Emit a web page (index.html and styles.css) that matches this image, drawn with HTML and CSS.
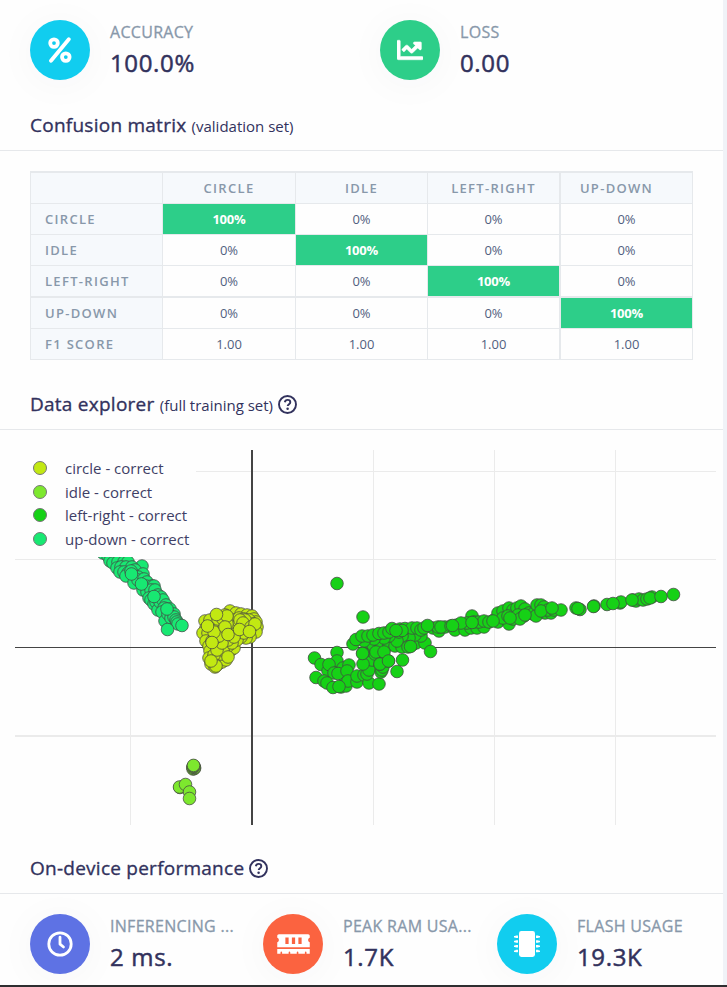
FILE: index.html
```html
<!DOCTYPE html>
<html lang="en">
<head>
<meta charset="utf-8">
<title>Model performance</title>
<link rel="stylesheet" href="styles.css">
</head>
<body>
<main class="panel">
  <section class="stats stats-top">
    <div class="stat">
      <span class="badge cyan"><svg width="24" height="26" viewBox="0 0 24 26"><g fill="none" stroke="#fff" stroke-width="3.8" stroke-linecap="round"><circle cx="6" cy="6.1" r="3.8"/><circle cx="17.8" cy="20.1" r="3.8"/><path d="M20.8 2.2 3 23.8"/></g></svg></span>
      <div class="stat-text"><div class="label">ACCURACY</div><div class="value">100.0%</div></div>
    </div>
    <div class="stat">
      <span class="badge green"><svg width="26" height="26" viewBox="0 0 512 512"><path fill="#fff" stroke="#fff" stroke-width="10" d="M496 384H64V80c0-8.84-7.16-16-16-16H16C7.16 64 0 71.16 0 80v336c0 17.67 14.33 32 32 32h464c8.84 0 16-7.16 16-16v-32c0-8.84-7.16-16-16-16zM464 96H345.94c-21.38 0-32.09 25.85-16.97 40.97l32.4 32.4L288 242.75l-73.37-73.37c-12.5-12.5-32.76-12.5-45.25 0l-68.69 68.69c-6.25 6.25-6.25 16.38 0 22.63l22.62 22.62c6.25 6.25 16.38 6.25 22.63 0L192 237.25l73.37 73.37c12.5 12.5 32.76 12.5 45.25 0l96-96 32.4 32.4c15.12 15.12 40.97 4.41 40.97-16.97V112c.01-8.84-7.15-16-15.99-16z"/></svg></span>
      <div class="stat-text"><div class="label">LOSS</div><div class="value">0.00</div></div>
    </div>
  </section>

  <h2 class="heading heading-matrix">Confusion matrix <small>(validation set)</small></h2>

  <table class="matrix">
    <colgroup><col class="c132"><col class="c133"><col class="c132"><col class="c133"><col class="c132"></colgroup>
    <tr><th></th><th>CIRCLE</th><th>IDLE</th><th>LEFT-RIGHT</th><th class="last">UP-DOWN</th></tr>
    <tr><th>CIRCLE</th><td class="hit">100%</td><td>0%</td><td>0%</td><td>0%</td></tr>
    <tr><th>IDLE</th><td>0%</td><td class="hit">100%</td><td>0%</td><td>0%</td></tr>
    <tr class="thick"><th>LEFT-RIGHT</th><td>0%</td><td>0%</td><td class="hit">100%</td><td>0%</td></tr>
    <tr><th>UP-DOWN</th><td>0%</td><td>0%</td><td>0%</td><td class="hit">100%</td></tr>
    <tr><th>F1 SCORE</th><td>1.00</td><td>1.00</td><td>1.00</td><td>1.00</td></tr>
  </table>

  <h2 class="heading heading-explorer">Data explorer <small>(full training set)</small> <svg class="help" width="19" height="19" viewBox="0 0 19 19"><circle cx="9.5" cy="9.5" r="8.5"/><path d="M6.8 7.2C7.1 5.6 8.2 4.9 9.6 4.9c1.5 0 2.7.9 2.7 2.3 0 1.9-2.6 2-2.6 3.9"/><circle class="dot" cx="9.6" cy="13.7" r="1.25"/></svg></h2>

  <div class="plot">
    <svg id="scatter" width="701" height="375" viewBox="15 450 701 375">
      <g class="grid">
        <path d="M130.5 450V825M373.5 450V825M494.5 450V825M615.5 450V825M15 471.5H716M15 559.5H716"/>
        <path class="wide" d="M15 736H716"/>
      </g>
      <path class="axis-x" d="M15 647.5H716"/>
      <path class="axis-y" d="M252 450V825"/>
      <g id="points"></g>
    </svg>
    <ul class="legend">
      <li><i class="k-circle"></i>circle - correct</li>
      <li><i class="k-idle"></i>idle - correct</li>
      <li><i class="k-lr"></i>left-right - correct</li>
      <li><i class="k-ud"></i>up-down - correct</li>
    </ul>
  </div>

  <h2 class="heading heading-device">On-device performance <svg class="help" width="19" height="19" viewBox="0 0 19 19"><circle cx="9.5" cy="9.5" r="8.5"/><path d="M6.8 7.2C7.1 5.6 8.2 4.9 9.6 4.9c1.5 0 2.7.9 2.7 2.3 0 1.9-2.6 2-2.6 3.9"/><circle class="dot" cx="9.6" cy="13.7" r="1.25"/></svg></h2>

  <section class="stats stats-bottom">
    <div class="stat">
      <span class="badge indigo"><svg width="26" height="26" viewBox="0 0 26 26"><circle cx="13" cy="13" r="11.2" fill="none" stroke="#fff" stroke-width="2.8"/><path d="M13 6.2V13.2L16.5 16" fill="none" stroke="#fff" stroke-width="2.8" stroke-linecap="round" stroke-linejoin="round"/></svg></span>
      <div class="stat-text"><div class="label">INFERENCING ...</div><div class="value">2 ms.</div></div>
    </div>
    <div class="stat">
      <span class="badge orange"><svg width="33" height="26" viewBox="0 0 640 512"><path fill="#fff" d="M640 130.94V96c0-17.67-14.33-32-32-32H32C14.33 64 0 78.33 0 96v34.94c18.6 6.61 32 24.19 32 45.06s-13.4 38.45-32 45.06V320h640v-98.94c-18.6-6.61-32-24.19-32-45.06s13.4-38.45 32-45.06zM224 256h-64V128h64v128zm128 0h-64V128h64v128zm128 0h-64V128h64v128zM0 448h64v-26.67c0-8.84 7.16-16 16-16s16 7.16 16 16V448h128v-26.67c0-8.84 7.16-16 16-16s16 7.16 16 16V448h128v-26.67c0-8.84 7.16-16 16-16s16 7.16 16 16V448h128v-26.67c0-8.84 7.16-16 16-16s16 7.16 16 16V448h64v-96H0v96z"/></svg></span>
      <div class="stat-text"><div class="label">PEAK RAM USA...</div><div class="value">1.7K</div></div>
    </div>
    <div class="stat">
      <span class="badge cyan"><svg width="26" height="26" viewBox="0 0 26 26"><g fill="#fff"><rect x="5" width="16" height="26" rx="2.4"/><path d="M4 4.4v2.5H1.8L1.2 6.5H0V5h1.2l.6-.6zM4 9.2v2.5H1.8l-.6-.4H0V9.8h1.2l.6-.6zM4 14v2.5H1.8l-.6-.4H0v-1.5h1.2l.6-.6zM4 18.8v2.5H1.8l-.6-.4H0v-1.5h1.2l.6-.6zM22 4.4v2.5h2.2l.6-.4H26V5h-1.2l-.6-.6zM22 9.2v2.5h2.2l.6-.4H26V9.8h-1.2l-.6-.6zM22 14v2.5h2.2l.6-.4H26v-1.5h-1.2l-.6-.6zM22 18.8v2.5h2.2l.6-.4H26v-1.5h-1.2l-.6-.6z"/></g></svg></span>
      <div class="stat-text"><div class="label">FLASH USAGE</div><div class="value">19.3K</div></div>
    </div>
  </section>
</main>
<script src="script.js"></script>
</body>
</html>
```
FILE: styles.css
```css
* { box-sizing: border-box; }
html { background: #f0f2f7; }
body {
  margin: 0;
  width: 727px;
  height: 987px;
  overflow: hidden;
  font-family: "Open Sans", sans-serif;
  color: #32325d;
  border-bottom: 2px solid #2e2e30;
  background: #f0f2f7;
}
.panel { width: 723px; height: 985px; background: #fefefe; overflow: hidden; }
.stats { display: grid; padding-left: 30px; }
.stats-top { grid-template-columns: 350px 343px; padding-top: 20px; height: 102px; }
.stats-bottom { grid-template-columns: 233px 234px 1fr; padding-top: 20px; }
.stat { display: flex; gap: 20px; }
.badge {
  flex: none;
  width: 60px;
  height: 60px;
  border-radius: 50%;
  display: flex;
  align-items: center;
  justify-content: center;
  box-shadow: 0 4px 42px rgba(60, 60, 80, .04);
}
.cyan { background: #11cdef; }
.green { background: #2dce89; }
.indigo { background: #5e72e4; }
.orange { background: #fb6340; }
.label { font-size: 16px; line-height: 24px; font-weight: 500; letter-spacing: .3px; color: #8898aa; -webkit-text-stroke: .3px #8898aa; white-space: nowrap; }
.value { font-size: 24px; line-height: 36px; margin-top: 1px; font-weight: 500; letter-spacing: .65px; -webkit-text-stroke: .5px #32325d; }
.heading {
  margin: 0;
  padding-left: 30px;
  height: 49px;
  line-height: 46px;
  font-size: 19px;
  font-weight: 500;
  letter-spacing: .25px;
  -webkit-text-stroke: .35px #32325d;
  white-space: nowrap;
  border-bottom: 1px solid #e6e8eb;
}
.heading small { font-size: 15px; font-weight: 400; letter-spacing: 0; -webkit-text-stroke: 0; }
.help { vertical-align: -3px; fill: none; stroke: #32325d; stroke-width: 1.9; }
.help .dot { fill: #32325d; stroke: none; }
.matrix {
  margin: 20px 0 0 30px;
  width: 663px;
  table-layout: fixed;
  border-collapse: separate;
  border-spacing: 0;
  border-top: 2px solid #e6e9ec;
  border-left: 1px solid #e6e9ec;
}
.c132 { width: 132px; }
.c133 { width: 133px; }
.matrix th, .matrix td {
  height: 31px;
  padding: 0;
  line-height: 18px;
  text-align: center;
  font-size: 13px;
  border-right: 1px solid #e6e9ec;
  border-bottom: 1px solid #e6e9ec;
}
.matrix td { color: #525f7f; }
.matrix th { background: #f6f9fc; color: #8898aa; font-weight: 600; letter-spacing: 1.3px; }
.matrix th:first-child { text-align: left; padding-left: 14px; }
.matrix th:nth-child(4), .matrix td:nth-child(4) { border-right-width: 2px; }
.matrix .thick th, .matrix .thick td { height: 32px; border-bottom-width: 2px; }
.matrix th.last { padding-right: 20px; }
.matrix td.hit { background: #2dce89; color: #fff; font-weight: 700; letter-spacing: -.2px; }
.heading-explorer { margin-top: 21px; }
.plot { position: relative; margin: 20px 0 0 15px; width: 701px; height: 375px; }
.plot svg { display: block; }
.grid path { fill: none; stroke: #ebebeb; stroke-width: 1; }
.grid .wide { stroke-width: 2; }
.axis-x { stroke: #444; stroke-width: 1; }
.axis-y { stroke: #444; stroke-width: 2; }
#points circle { stroke: #444; stroke-opacity: .75; stroke-width: 1; }
.legend {
  position: absolute;
  left: 0;
  top: 0;
  width: 181px;
  height: 107px;
  margin: 0;
  padding: 6px 0 0 18px;
  list-style: none;
  background: #fefefe;
}
.legend li { display: flex; align-items: center; height: 23.7px; font-size: 15px; white-space: nowrap; color: #3f3f66; }
.legend i { width: 14px; height: 14px; margin-right: 18px; border-radius: 50%; border: 1px solid #777; }
.k-circle { background: #c2e812; }
.k-idle { background: #7de82e; }
.k-lr { background: #16d116; }
.k-ud { background: #18e872; }
.heading-device { margin-top: 20px; }
```
FILE: script.js
```js
// Point centres of each class, listed back to front.
const series = [
  { fill: '#18e872', points: [
    [103,553],[108,556],[112,554],[116,558],[122,556],[125,558],[110,561],[113,563],[118,562],[124,562],[128,562],[142,566],[117,568],[121,567],[126,567],[132,567],[135,570],[143,574],[120,572],[124,572],[128,573],[134,575],[138,577],[126,576],[134,583],[138,580],[144,579],[147,582],[146,586],[152,586],[154,586],[143,590],[147,592],[151,590],[155,590],[149,598],[151,600],[154,604],[156,602],[158,595],[161,597],[158,610],[160,602],[163,600],[166,605],[164,608],[162,612],[170,609],[174,614],[165,621],[168,614],[171,618],[174,617],[176,620],[177,622],[178,624],[182,625.5],[167.5,629.5],[167,609],[154,596.5],[141.5,584],[131,571],[131.5,574]] },
  { fill: '#c2e812', points: [
    [205,621],[206,628],[203,633],[208,633],[206,641],[209,646],[212,641],[210,651],[209,658],[211,664],[215,667],[218,664],[222,662],[226,660],[221,654],[214,655],[231,650],[234,648],[228,646],[223,650],[217,650],[230,611],[236,613],[241,614],[247,615],[252,616],[254,619],[256,622],[257,627],[256,632],[250,637],[246,638],[241,637],[237,640],[232,643],[228,640],[222,643],[215,638],[213,627],[218,625],[225,615],[228,618],[234,620],[239,618],[244,619],[249,620],[253,624],[246,626],[241,624],[235,627],[230,630],[222,631],[227,624],[219,636],[214,632],[210,620],[218,619],[223,619],[227,616],[237,633],[244,633],[234,637],[245,620],[240,620],[243,623],[251,627],[255,624],[216.5,614.5],[207.5,626],[225,627],[228,634.5],[239.5,629.5],[249.5,631.5],[212,642.5],[228,657],[216,666],[211,661]] },
  { fill: '#7de82e', points: [
    [193,769],[194.5,768.5],[193.5,768.5],[194.5,767.5],[192.8,767.2],[193.5,766.8],[194,766.2],[193.5,766],[193.5,765.4],[180,787.5],[179.5,787],[185.5,784.5],[189.5,792],[189.5,798.5]] },
  { fill: '#16d116', points: [
    [337,583.5],[363,617],[314.5,658],[337,652.5],[321,664.5],[337,661],[328,671],[343,668],[349,665],[329,664.5],[334,673],[316,677.5],[324,681],[327,683],[333,687.5],[341,687],[346,686],[345,677],[338,673.5],[347,671],[348,681],[357,682],[357,676],[364,675],[339,686.5],[369,683],[379,684],[367,674],[369,670],[381,672],[382,670],[383,667],[382,659],[372,660],[370,650],[375,654],[380,664],[363,664],[397,671.5],[402.5,660],[388.5,661],[363,653],[353,644],[368,642],[373,645],[381,648],[389,645],[395,646],[402,647],[412,645],[416,643],[425,643],[421,636],[415,635],[409,638],[402,636],[397,641],[389,636],[384,638],[374,639],[364,641],[356,639.5],[362,636],[368,636],[373,635],[379,633.5],[384,633],[389,632],[392,628.5],[400,629],[405,628.5],[412,628],[417,628],[399,632],[402,630.5],[396,630.5],[376,652],[384,652],[362.5,653.5],[380,664],[388.5,661],[408,647],[410.5,646.5],[430.5,651.5],[421,630],[424,628],[433,628],[439,631],[438,627],[445,627],[441,627],[427.5,625.5],[451,626],[457,625],[455,630],[465,630],[471,628],[477,628],[484,627],[472,616],[467,623],[461,623],[452.5,625.5],[474,622],[479,622],[484,621],[489,622],[494,620],[498,622],[472,622.5],[498,613],[503,611],[509,608],[513,610],[517,608],[521,606],[525,609],[509,624],[503,618],[508,616],[513,619],[518,615],[524,616],[520,619],[510,618],[493,621],[529,613],[533,614],[539,613],[545,613],[551,613],[537,605],[541,605],[544,607],[548,610],[554,610],[561,610],[536,616],[525,615],[541,611],[552,608],[576,608],[580,609.5],[578,608.5],[594,606],[593.5,606.5],[607,604.5],[620,603],[621,602],[613,603.5],[633,600],[636,601],[639,599],[643,600],[647,599],[652,597],[632,600],[650,598],[661,596.5],[673.5,594.5]] }
];

const layer = document.getElementById('points');
for (const { fill, points } of series) {
  for (const [x, y] of points) {
    const dot = document.createElementNS('http://www.w3.org/2000/svg', 'circle');
    dot.setAttribute('cx', x);
    dot.setAttribute('cy', y);
    dot.setAttribute('r', 6.3);
    dot.setAttribute('fill', fill);
    layer.appendChild(dot);
  }
}
```
